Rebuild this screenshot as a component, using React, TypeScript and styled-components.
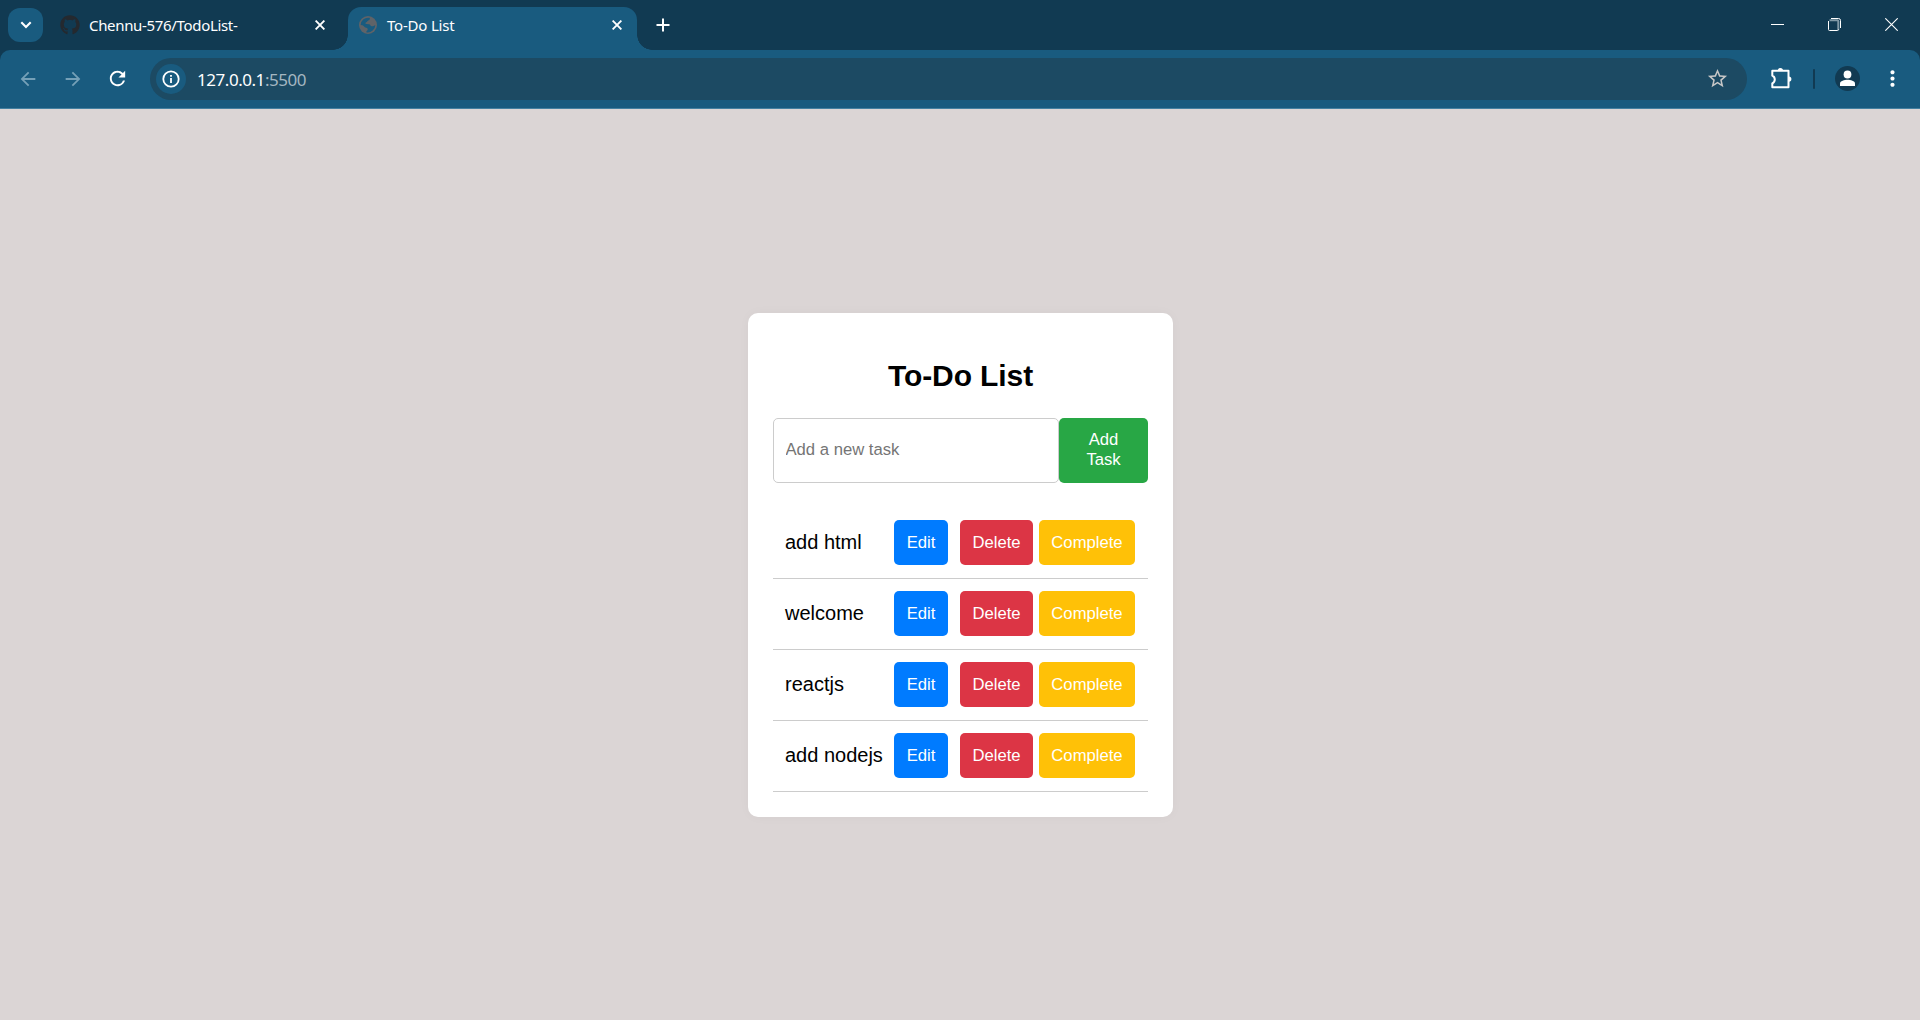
import React from "react";
import styled, { createGlobalStyle } from "styled-components";
import {
  MdArrowBack,
  MdArrowForward,
  MdRefresh,
  MdStarBorder,
  MdMoreVert,
} from "react-icons/md";
import { FaGithub } from "react-icons/fa";

const ui = '"Noto Sans", "Open Sans", sans-serif';
const arial = '"Liberation Sans", Arial, sans-serif';
const frame = "#113a52";
const bar = "#195b7f";

const GlobalStyle = createGlobalStyle`
  *, *::before, *::after { box-sizing: border-box; }
  body { margin: 0; background: #dbd5d5; overflow: hidden; }
  svg { display: block; flex: none; }
  button { font: inherit; border: 0; padding: 0; }
`;

const Window = styled.div`
  display: flex;
  flex-direction: column;
  width: 100%;
  height: 1020px;
`;

const TabStrip = styled.header`
  display: flex;
  height: 50px;
  padding-left: 8px;
  background: ${frame};
  color: #fff;
  font-family: ${ui};
`;

const TabSearch = styled.button`
  display: grid;
  place-items: center;
  width: 35px;
  height: 34px;
  margin-top: 8px;
  border-radius: 12px;
  background: ${bar};
  color: #fff;
`;

const Tab = styled.div<{ $active?: boolean }>`
  position: relative;
  display: flex;
  align-items: center;
  width: ${(p) => (p.$active ? 289 : 305)}px;
  height: 43px;
  margin-top: 7px;
  padding: 0 ${(p) => (p.$active ? "15px 7px 11px" : "23px 7px 17px")};
  border-radius: 13px 13px 0 0;
  background: ${(p) => (p.$active ? bar : "transparent")};

  &::before,
  &::after {
    content: "";
    display: ${(p) => (p.$active ? "block" : "none")};
    position: absolute;
    bottom: 0;
    width: 15px;
    height: 15px;
  }
  &::before {
    left: -15px;
    background: radial-gradient(circle at 0 0, transparent 14.5px, ${bar} 15px);
  }
  &::after {
    right: -15px;
    background: radial-gradient(circle at 100% 0, transparent 14.5px, ${bar} 15px);
  }
`;

const TabTitle = styled.span<{ $gap: number; $tracking: number }>`
  flex: 1;
  margin-left: ${(p) => p.$gap}px;
  font-size: 15px;
  line-height: 20px;
  letter-spacing: ${(p) => p.$tracking}px;
  white-space: nowrap;
`;

const NewTab = styled.button`
  display: grid;
  place-items: center;
  width: 34px;
  height: 34px;
  margin: 8px 0 0 9px;
  background: none;
  color: #fff;
`;

const WindowControls = styled.div`
  display: flex;
  height: 50px;
  margin-left: auto;
`;

const WindowButton = styled.button`
  display: grid;
  place-items: center;
  width: 57px;
  height: 49px;
  background: none;
  color: #fff;
`;

const ToolbarBack = styled.div`
  background: ${frame};
`;

const Toolbar = styled.nav`
  display: flex;
  align-items: center;
  height: 59px;
  padding: 0 15px 1px 5px;
  border-bottom: 1px solid #4480a0;
  border-radius: 10px 10px 0 0;
  background: ${bar};
  color: #fff;
  font-family: ${ui};
`;

const NavButton = styled.button<{ $off?: boolean }>`
  display: grid;
  place-items: center;
  width: 45px;
  height: 40px;
  background: none;
  color: ${(p) => (p.$off ? "#75a0b7" : "#fff")};
`;

const AddressBar = styled.div`
  display: flex;
  align-items: center;
  flex: 1;
  height: 42px;
  margin-left: 10px;
  padding: 0 18px 0 6px;
  border-radius: 21px;
  background: #1c4a63;
  color: #c7c7c7;
`;

const SiteInfo = styled.span`
  display: grid;
  place-items: center;
  width: 30px;
  height: 30px;
  border-radius: 50%;
  background: ${bar};
  color: #fff;
`;

const Url = styled.span`
  flex: 1;
  margin-left: 11px;
  padding-top: 2px;
  color: #fff;
  font-size: 17px;
  line-height: 24px;
  letter-spacing: -0.46px;
`;

const Port = styled.span`
  color: #a4b7c1;
`;

const Extensions = styled.button`
  display: grid;
  place-items: center;
  width: 26px;
  height: 26px;
  margin-left: 22px;
  background: none;
  color: #fff;
`;

const Divider = styled.i`
  width: 2px;
  height: 20px;
  margin: 0 20px 0 18px;
  border-radius: 1px;
  background: ${frame};
`;

const Avatar = styled.span`
  display: grid;
  place-items: center;
  width: 25px;
  height: 25px;
  margin-right: 20px;
  border-radius: 50%;
  background: ${frame};
  color: #fff;
`;

const Page = styled.main`
  display: grid;
  flex: 1;
  place-items: center;
  background: #dbd5d5;
  font-family: ${arial};
`;

const Card = styled.section`
  width: 425px;
  height: 504px;
  padding: 25px;
  border-radius: 10px;
  background: #fff;
  box-shadow: 0 0 12px rgba(0, 0, 0, 0.03);
`;

const Title = styled.h1`
  margin: 20px 0 25px;
  padding-left: 1px;
  color: #000;
  font-size: 30px;
  font-weight: 700;
  line-height: 35px;
  letter-spacing: -0.1px;
  text-align: center;
`;

const TaskForm = styled.form`
  display: flex;
  height: 65px;
  margin-bottom: 25px;
  font-size: 16.67px;
`;

const TaskInput = styled.input`
  flex: 1;
  min-width: 0;
  padding: 0 12px;
  border: 1px solid #ccc;
  border-radius: 5px;
  background: #fff;
  font-family: inherit;
  font-size: inherit;
  outline: none;

  &::placeholder {
    color: #757575;
  }
`;

const AddButton = styled.button`
  width: 89px;
  padding: 0 12px 0 13px;
  border-radius: 5px;
  background: #28a745;
  color: #fff;
  line-height: 20px;
`;

const TaskList = styled.ul`
  margin: 0;
  padding: 0;
  list-style: none;
`;

const TaskRow = styled.li`
  display: flex;
  align-items: center;
  height: 71px;
  padding: 0 13px 0 12.5px;
  border-bottom: 1px solid #ccc;
`;

const TaskName = styled.span`
  flex: 1;
  padding-bottom: 2px;
  color: #000;
  font-size: 20px;
  line-height: 24px;
  white-space: nowrap;
`;

const kinds = {
  edit: { color: "#007bff", width: 54, gap: 0 },
  remove: { color: "#dc3545", width: 73, gap: 12 },
  complete: { color: "#ffc107", width: 96, gap: 6 },
};

const ActionButton = styled.button<{ $kind: keyof typeof kinds }>`
  width: ${(p) => kinds[p.$kind].width}px;
  height: 45px;
  margin-left: ${(p) => kinds[p.$kind].gap}px;
  padding-left: 1px;
  border-radius: 5px;
  background: ${(p) => kinds[p.$kind].color};
  color: #fff;
  font-size: 16.67px;
`;

const CloseIcon = () => (
  <svg width="10" height="10" viewBox="0 0 10 10" stroke="currentColor" strokeWidth="1.9">
    <path d="M.6.6l8.8 8.8M9.4.6L.6 9.4" />
  </svg>
);

const GlobeIcon = () => (
  <svg width="18" height="18" viewBox="0 0 18 18">
    <circle cx="9" cy="9" r="9" fill="#5f6368" />
    <path
      d="M10.6 1.8C11.4 3 10.5 4 9.2 4.4C8 4.7 8.4 6 7.2 6.3C6 6.7 6.2 8 7.4 8.1L10 8.2C11.5 8.4 11.3 10 12.8 10.2C14 10.4 15 9.6 16.3 9.2A7.4 7.4 0 0 1 7.2 16.2C7.4 15 8.6 14.8 8.7 13.6C8.9 12 7.6 11.8 6.4 11.4C5 11 4.8 9.6 3.4 9.3L1.7 9.1A7.4 7.4 0 0 1 10.6 1.8Z"
      fill={bar}
    />
  </svg>
);

const PuzzleIcon = () => (
  <svg width="26" height="26" viewBox="0 0 26 26" fill="none" stroke="currentColor" strokeWidth="2" strokeLinejoin="round">
    <path d="M3.300 4.800H19.500V21.200H3.300V17.300C6.600 15.800 6.600 11.200 3.300 9.700Z" />
    <path d="M8.800 4.500a2.600 2.600 0 0 1 5.200 0ZM19.800 10.500a2.600 2.600 0 0 1 0 5.200Z" fill="currentColor" stroke="none" />
  </svg>
);

const tasks = ["add html", "welcome", "reactjs", "add nodejs"];

export default function App() {
  return (
    <Window>
      <GlobalStyle />
      <TabStrip>
        <TabSearch aria-label="Search tabs">
          <svg width="12" height="8" viewBox="0 0 12 8" fill="none" stroke="currentColor" strokeWidth="2.1">
            <path d="M1.3 1.2L6 5.9l4.7-4.7" />
          </svg>
        </TabSearch>
        <Tab>
          <FaGithub size={20} color="#24292f" />
          <TabTitle $gap={9} $tracking={-0.33}>Chennu-576/TodoList-</TabTitle>
          <CloseIcon />
        </Tab>
        <Tab $active>
          <GlobeIcon />
          <TabTitle $gap={10} $tracking={-0.2}>To-Do List</TabTitle>
          <CloseIcon />
        </Tab>
        <NewTab aria-label="New tab">
          <svg width="14" height="14" viewBox="0 0 14 14" stroke="currentColor" strokeWidth="2">
            <path d="M7 .5v13M.5 7h13" />
          </svg>
        </NewTab>
        <WindowControls>
          <WindowButton aria-label="Minimize">
            <svg width="13" height="1" viewBox="0 0 13 1">
              <path d="M0 .5h13" stroke="currentColor" />
            </svg>
          </WindowButton>
          <WindowButton aria-label="Restore">
            <svg width="14" height="13" viewBox="0 0 14 13" fill="none" stroke="currentColor">
              <path d="M1.500 2.200H9.300a1 1 0 0 1 1 1V12" stroke="#7f98a5" strokeWidth="2" />
              <rect x=".5" y="2.500" width="10" height="10" rx="1" stroke="none" />
              <path d="M.5 3V11.500a1 1 0 0 0 1 1H9.500a1 1 0 0 0 1-1" />
              <path d="M3 .5H10.500A2 2 0 0 1 12.500 2.500V10" />
            </svg>
          </WindowButton>
          <WindowButton aria-label="Close">
            <svg width="13" height="13" viewBox="0 0 13 13" stroke="currentColor" strokeWidth="1.1">
              <path d="M.3.3l12.4 12.4M12.7.3L.3 12.7" />
            </svg>
          </WindowButton>
        </WindowControls>
      </TabStrip>
      <ToolbarBack>
        <Toolbar>
          <NavButton $off aria-label="Back"><MdArrowBack size={22} /></NavButton>
          <NavButton $off aria-label="Forward"><MdArrowForward size={22} /></NavButton>
          <NavButton aria-label="Reload"><MdRefresh size={23} /></NavButton>
          <AddressBar>
            <SiteInfo>
              <svg width="18" height="18" viewBox="0 0 18 18" fill="none" stroke="currentColor" strokeWidth="1.8">
                <circle cx="9" cy="9" r="7.7" />
                <path d="M9 8v5M9 5v1.8" />
              </svg>
            </SiteInfo>
            <Url>127.0.0.1<Port>:5500</Port></Url>
            <MdStarBorder size={23} />
          </AddressBar>
          <Extensions aria-label="Extensions"><PuzzleIcon /></Extensions>
          <Divider />
          <Avatar>
            <svg width="17" height="17" viewBox="0 0 17 17" fill="currentColor">
              <circle cx="8.5" cy="4.5" r="3.9" />
              <path d="M1 16v-2.6C1 11 5.5 9.7 8.5 9.7s7.5 1.300 7.5 3.700V16z" />
            </svg>
          </Avatar>
          <MdMoreVert size={25} />
        </Toolbar>
      </ToolbarBack>
      <Page>
        <Card>
          <Title>To-Do List</Title>
          <TaskForm onSubmit={(e) => e.preventDefault()}>
            <TaskInput placeholder="Add a new task" />
            <AddButton>Add Task</AddButton>
          </TaskForm>
          <TaskList>
            {tasks.map((task) => (
              <TaskRow key={task}>
                <TaskName>{task}</TaskName>
                <ActionButton $kind="edit">Edit</ActionButton>
                <ActionButton $kind="remove">Delete</ActionButton>
                <ActionButton $kind="complete">Complete</ActionButton>
              </TaskRow>
            ))}
          </TaskList>
        </Card>
      </Page>
    </Window>
  );
}
